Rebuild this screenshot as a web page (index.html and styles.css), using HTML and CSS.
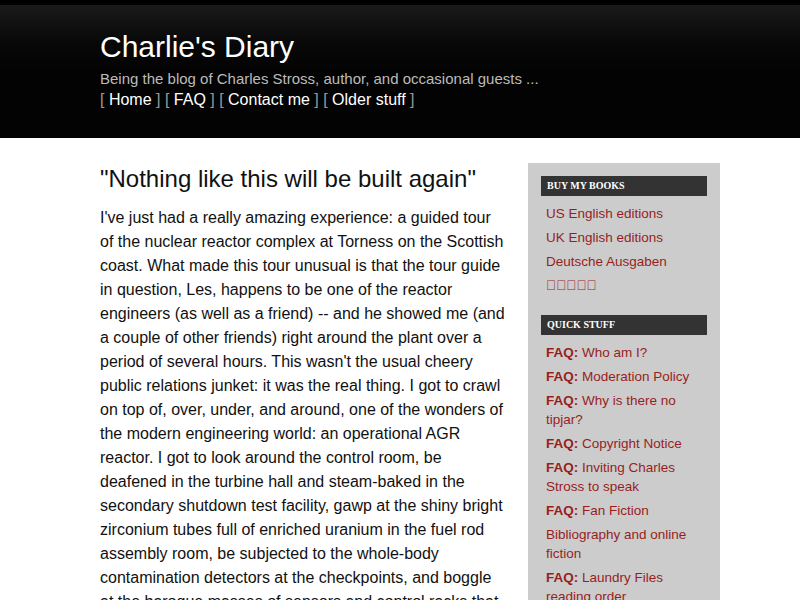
FILE: index.html
```html
<!DOCTYPE html>
<html>
<head>
<meta charset="utf-8">
<title>Charlie's Diary</title>
<link rel="stylesheet" href="styles.css">
</head>
<body>
<header class="site-header">
  <div class="header-inner">
    <h1 class="site-title">Charlie's Diary</h1>
    <p class="site-tagline">Being the blog of Charles Stross, author, and occasional guests ...</p>
    <nav class="site-nav">[ <a href="#">Home</a> ] [ <a href="#">FAQ</a> ] [ <a href="#">Contact me</a> ] [ <a href="#">Older stuff</a> ]</nav>
  </div>
</header>
<div class="page">
  <main class="content">
    <h2 class="entry-title">"Nothing like this will be built again"</h2>
    <p class="entry-body">I've just had a really amazing experience: a guided tour of the nuclear reactor complex at Torness on the Scottish coast. What made this tour unusual is that the tour guide in question, Les, happens to be one of the reactor engineers (as well as a friend) -- and he showed me (and a couple of other friends) right around the plant over a period of several hours. This wasn't the usual cheery public relations junket: it was the real thing. I got to crawl on top of, over, under, and around, one of the wonders of the modern engineering world: an operational AGR reactor. I got to look around the control room, be deafened in the turbine hall and steam-baked in the secondary shutdown test facility, gawp at the shiny bright zirconium tubes full of enriched uranium in the fuel rod assembly room, be subjected to the whole-body contamination detectors at the checkpoints, and boggle at the baroque masses of sensors and control racks that surround the reactor core.</p>
  </main>
  <aside class="sidebar">
    <section class="widget">
      <h3 class="widget-title">Buy my books</h3>
      <ul class="widget-list">
        <li><a href="#">US English editions</a></li>
        <li><a href="#">UK English editions</a></li>
        <li><a href="#">Deutsche Ausgaben</a></li>
        <li><a href="#" class="tofu">&#xE000;&#xE001;&#xE002;&#xE003;&#xE004;</a></li>
      </ul>
    </section>
    <section class="widget">
      <h3 class="widget-title">Quick stuff</h3>
      <ul class="widget-list">
        <li><a href="#"><b>FAQ:</b> Who am I?</a></li>
        <li><a href="#"><b>FAQ:</b> Moderation Policy</a></li>
        <li><a href="#"><b>FAQ:</b> Why is there no tipjar?</a></li>
        <li><a href="#"><b>FAQ:</b> Copyright Notice</a></li>
        <li><a href="#"><b>FAQ:</b> Inviting Charles Stross to speak</a></li>
        <li><a href="#"><b>FAQ:</b> Fan Fiction</a></li>
        <li><a href="#">Bibliography and online fiction</a></li>
        <li><a href="#"><b>FAQ:</b> Laundry Files reading order</a></li>
      </ul>
    </section>
  </aside>
</div>
</body>
</html>
```
FILE: styles.css
```css
html, body {
  margin: 0;
  padding: 0;
  background: #fff;
  font-family: "Liberation Sans", Arial, sans-serif;
}

.site-header {
  border-top: 5px solid #000;
  background: linear-gradient(to bottom, #1a1a1a 0px, #070707 40px, #030303 70px);
  height: 138px;
  box-sizing: border-box;
}

.header-inner {
  padding: 24px 0 0 100px;
}

.site-title {
  margin: 0;
  font-size: 30px;
  font-weight: normal;
  line-height: 36px;
  color: #fff;
}

.site-tagline {
  margin: 4px 0 0;
  font-size: 15px;
  line-height: 20px;
  color: #bbb;
}

.site-nav {
  margin-top: 0;
  font-size: 16px;
  line-height: 22px;
  color: #999;
}

.site-nav a {
  color: #fff;
  text-decoration: none;
}

.page {
  margin: 25px 0 0 100px;
  display: flex;
  gap: 23px;
  align-items: flex-start;
}

.content {
  width: 405px;
  flex: none;
}

.entry-title {
  margin: 0;
  padding-top: 1px;
  font-size: 24px;
  font-weight: normal;
  line-height: 30px;
  color: #111;
}

.entry-body {
  margin: 12px 0 0;
  font-size: 16px;
  line-height: 24px;
  color: #111;
}

.sidebar {
  width: 192px;
  flex: none;
  background: #ccc;
  padding: 13px 13px 10px;
  box-sizing: border-box;
}

.widget + .widget {
  margin-top: 20px;
}

.widget-title {
  margin: 0;
  background: #333;
  color: #fff;
  font-family: "Liberation Serif", "Times New Roman", serif;
  font-size: 10px;
  font-weight: bold;
  text-transform: uppercase;
  line-height: 20px;
  padding: 0 6px;
}

.widget-list {
  list-style: none;
  margin: 8px 0 0;
  padding: 0 5px;
}

.widget-list li {
  font-size: 13.5px;
  line-height: 19px;
}

.widget-list li + li {
  margin-top: 5px;
}

.widget-list a {
  color: #981e1e;
  text-decoration: none;
}

.widget-list b {
  font-weight: bold;
}
```
